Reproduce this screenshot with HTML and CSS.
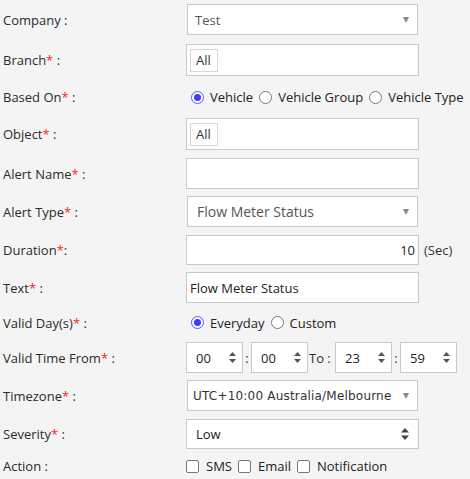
FILE: index.html
```html
<!DOCTYPE html>
<html>
<head>
<meta charset="utf-8">
<link rel="stylesheet" href="styles.css">
</head>
<body>
<div class="form">
  <div class="row gap9">
    <div class="label">Company :</div>
    <div class="select"><span class="val muted">Test</span><span class="tri"></span></div>
  </div>
  <div class="row gap0">
    <div class="label">Branch<span class="req">*</span> :</div>
    <div class="input tall chips"><span class="chip">All</span></div>
  </div>
  <div class="row radio-row h42">
    <div class="label">Based On<span class="req">*</span> :</div>
    <div class="options">
      <span class="radio on"></span><span class="opt">Vehicle</span>
      <span class="radio"></span><span class="opt">Vehicle Group</span>
      <span class="radio"></span><span class="opt">Vehicle Type</span>
    </div>
  </div>
  <div class="row gap8">
    <div class="label">Object<span class="req">*</span> :</div>
    <div class="input tall chips"><span class="chip">All</span></div>
  </div>
  <div class="row gap7">
    <div class="label">Alert Name<span class="req">*</span> :</div>
    <div class="input"></div>
  </div>
  <div class="row gap8">
    <div class="label">Alert Type<span class="req">*</span> :</div>
    <div class="select"><span class="val muted wide">Flow Meter Status</span><span class="tri"></span></div>
  </div>
  <div class="row gap7">
    <div class="label">Duration<span class="req">*</span>:</div>
    <div class="input short right"><span class="val">10</span></div>
    <span class="unit">(Sec)</span>
  </div>
  <div class="row gap0">
    <div class="label">Text<span class="req">*</span> :</div>
    <div class="input"><span class="val">Flow Meter Status</span></div>
  </div>
  <div class="row radio-row h39">
    <div class="label">Valid Day(s)<span class="req">*</span> :</div>
    <div class="options">
      <span class="radio on"></span><span class="opt">Everyday</span>
      <span class="radio"></span><span class="opt">Custom</span>
    </div>
  </div>
  <div class="row gap7">
    <div class="label">Valid Time From<span class="req">*</span> :</div>
    <div class="time"><span class="val">00</span><svg class="spin" width="7" height="11" viewBox="0 0 7 11"><path d="M3.5 0L7 4H0Z M3.5 11L0 7H7Z" fill="#555"/></svg></div>
    <span class="sep">:</span>
    <div class="time"><span class="val">00</span><svg class="spin" width="7" height="11" viewBox="0 0 7 11"><path d="M3.5 0L7 4H0Z M3.5 11L0 7H7Z" fill="#555"/></svg></div>
    <span class="to">To :</span>
    <div class="time"><span class="val">23</span><svg class="spin" width="7" height="11" viewBox="0 0 7 11"><path d="M3.5 0L7 4H0Z M3.5 11L0 7H7Z" fill="#555"/></svg></div>
    <span class="sep">:</span>
    <div class="time"><span class="val">59</span><svg class="spin" width="7" height="11" viewBox="0 0 7 11"><path d="M3.5 0L7 4H0Z M3.5 11L0 7H7Z" fill="#555"/></svg></div>
  </div>
  <div class="row gap8">
    <div class="label">Timezone<span class="req">*</span> :</div>
    <div class="select"><span class="val tz">UTC+10:00 Australia/Melbourne</span><span class="tri"></span></div>
  </div>
  <div class="row gap0">
    <div class="label">Severity<span class="req">*</span> :</div>
    <div class="input short native"><span class="val sev">Low</span><svg class="spin" width="8" height="12" viewBox="0 0 8 12"><path d="M4 0L8 4.5H0Z M4 12L0 7.5H8Z" fill="#444"/></svg></div>
  </div>
  <div class="row radio-row h34">
    <div class="label">Action :</div>
    <div class="options">
      <span class="check"></span><span class="opt">SMS</span>
      <span class="check"></span><span class="opt">Email</span>
      <span class="check"></span><span class="opt">Notification</span>
    </div>
  </div>
</div>
</body>
</html>
```
FILE: styles.css
```css
html, body {
  margin: 0;
  padding: 0;
  background: #f4f4f4;
}
body {
  font-family: "Open Sans", "Liberation Sans", sans-serif;
  font-size: 13px;
  color: #333;
}
.form {
  padding: 4px 0 0 3px;
  display: flex;
  flex-direction: column;
}
.row {
  display: flex;
  align-items: center;
}
.gap0 { padding-bottom: 0; }
.gap7 { padding-bottom: 7px; }
.gap8 { padding-bottom: 8px; }
.gap9 { padding-bottom: 9px; }
.h42 { height: 42px; }
.h39 { height: 39px; }
.h34 { height: 34px; }
.label {
  width: 183px;
  flex: none;
  color: #2b2b2b;
  white-space: nowrap;
}
.req {
  color: #ff1a1a;
}
.input, .select, .time {
  box-sizing: border-box;
  background: #fff;
  border: 1px solid #c9c9c9;
  display: flex;
  align-items: center;
}
.input {
  width: 233px;
  height: 31px;
  padding: 0 3px;
}
.input.tall {
  height: 32px;
}
.input.short {
  height: 30px;
}
.input.right {
  justify-content: flex-end;
  padding-right: 3px;
}
.input.native {
  justify-content: space-between;
  padding: 0 9px 0 9px;
  color: #222;
}
.select {
  width: 231px;
  height: 31px;
  margin-left: 1px;
  padding: 0 8px 0 7px;
  justify-content: space-between;
}
.val {
  color: #222;
}
.val.muted {
  color: #555;
}
.val.wide {
  font-size: 14px;
  padding-left: 2px;
}
.val.tz {
  font-family: "DejaVu Sans", "Verdana", sans-serif;
  font-size: 12px;
  letter-spacing: 0.2px;
  color: #333;
  margin-left: -2px;
}
.tri {
  width: 0;
  height: 0;
  border-left: 3.5px solid transparent;
  border-right: 3.5px solid transparent;
  border-top: 6px solid #888;
}
.chips {
  padding: 0 3px;
}
.chip {
  box-sizing: border-box;
  height: 23px;
  width: 28px;
  border: 1px solid #d6d6d6;
  display: flex;
  align-items: center;
  padding-left: 5px;
  color: #333;
}
.unit {
  margin-left: 5px;
  color: #333;
}
.options {
  display: flex;
  align-items: center;
  margin-left: 5px;
}
.radio {
  box-sizing: border-box;
  width: 13px;
  height: 13px;
  border-radius: 50%;
  border: 1px solid #777;
  background: #fff;
  flex: none;
  margin-right: 6px;
  position: relative;
}
.radio.on {
  border: 1px solid #5656ff;
}
.radio.on::after {
  content: "";
  position: absolute;
  left: 2px;
  top: 2px;
  width: 7px;
  height: 7px;
  border-radius: 50%;
  background: #3d3dff;
}
.opt {
  margin-right: 6px;
  color: #222;
}
.check {
  box-sizing: border-box;
  width: 13px;
  height: 13px;
  border-radius: 2px;
  border: 1px solid #777;
  background: #fff;
  flex: none;
  margin-right: 7px;
}
.h34 .options {
  margin-left: 0;
}
.time {
  width: 57px;
  height: 31px;
  padding: 0 6px 0 9px;
  justify-content: space-between;
}
.sep {
  width: 8px;
  text-align: center;
  color: #333;
}
.to {
  width: 27px;
  padding-left: 1px;
  box-sizing: border-box;
  color: #333;
}
.spin {
  display: block;
}
```
